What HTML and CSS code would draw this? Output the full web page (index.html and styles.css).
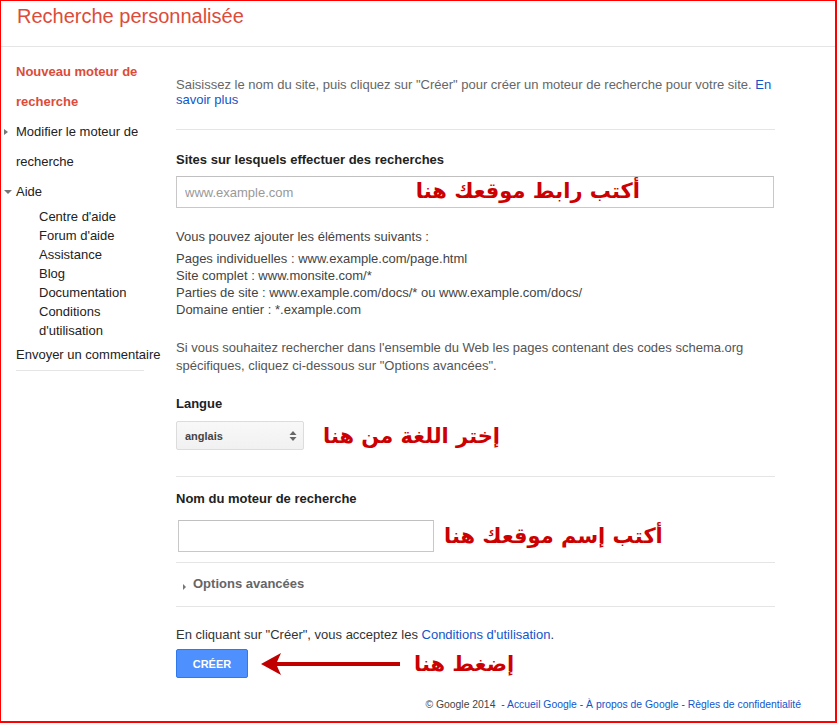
FILE: index.html
```html
<!DOCTYPE html>
<html lang="fr">
<head>
<meta charset="utf-8">
<title>Recherche personnalisée</title>
<link rel="stylesheet" href="styles.css">
</head>
<body>
<div class="frame">
  <header class="header">
    <h1 class="title">Recherche personnalisée</h1>
  </header>
  <div class="layout">
    <nav class="sidebar">
      <div class="nav-item nav-active">Nouveau moteur de recherche</div>
      <div class="nav-item nav-toggle"><span class="tri tri-right"></span>Modifier le moteur de recherche</div>
      <div class="nav-item nav-toggle"><span class="tri tri-down"></span>Aide</div>
      <ul class="subnav">
        <li>Centre d'aide</li>
        <li>Forum d'aide</li>
        <li>Assistance</li>
        <li>Blog</li>
        <li>Documentation</li>
        <li>Conditions d'utilisation</li>
      </ul>
      <div class="nav-feedback">Envoyer un commentaire</div>
    </nav>
    <main class="main">
      <p class="intro">Saisissez le nom du site, puis cliquez sur "Créer" pour créer un moteur de recherche pour votre site. <a class="link">En</a><br><a class="link">savoir plus</a></p>
      <hr class="rule rule-1">
      <h2 class="label label-sites">Sites sur lesquels effectuer des recherches</h2>
      <div class="site-field">
        <input class="text-input wide" type="text" placeholder="www.example.com">
        <span class="note note-over" dir="rtl">أكتب رابط موقعك هنا</span>
      </div>
      <p class="can-add">Vous pouvez ajouter les éléments suivants :</p>
      <p class="examples">Pages individuelles : www.example.com/page.html<br>Site complet : www.monsite.com/*<br>Parties de site : www.example.com/docs/* ou www.example.com/docs/<br>Domaine entier : *.example.com</p>
      <p class="schema">Si vous souhaitez rechercher dans l'ensemble du Web les pages contenant des codes schema.org spécifiques, cliquez ci-dessous sur "Options avancées".</p>
      <h2 class="label label-lang">Langue</h2>
      <div class="row row-lang">
        <div class="select">
          <span>anglais</span>
          <svg class="select-arrows" width="8" height="12" viewBox="0 0 8 12"><path d="M4 1 L7.5 5 H0.5 Z M4 11 L7.5 7 H0.5 Z" fill="#666"/></svg>
        </div>
        <span class="note" dir="rtl">إختر اللغة من هنا</span>
      </div>
      <hr class="rule rule-2">
      <h2 class="label label-name">Nom du moteur de recherche</h2>
      <div class="row row-name">
        <input class="text-input short" type="text">
        <span class="note" dir="rtl">أكتب إسم موقعك هنا</span>
      </div>
      <hr class="rule rule-3">
      <div class="advanced"><span class="tri tri-small"></span>Options avancées</div>
      <hr class="rule rule-4">
      <p class="terms">En cliquant sur "Créer", vous acceptez les <a class="link">Conditions d'utilisation</a>.</p>
      <div class="row row-btn">
        <button class="btn" type="button">CRÉER</button>
        <svg class="arrow" width="140" height="24" viewBox="0 0 140 24"><path d="M139 10 H16 L20 1 L0 12 L20 23 L16 14 H139 Z" fill="#c00000"/></svg>
        <span class="note" dir="rtl">إضغط هنا</span>
      </div>
    </main>
  </div>
  <footer class="footer">© Google 2014 &nbsp;- <a class="link">Accueil Google</a> - <a class="link">À propos de Google</a> - <a class="link">Règles de confidentialité</a></footer>
</div>
</body>
</html>
```

FILE: styles.css
```css
* { box-sizing: border-box; }
html, body { margin: 0; padding: 0; background: #fff; }
body { font-family: "Liberation Sans", Arial, sans-serif; font-size: 13px; color: #222; }

.frame {
  width: 837px;
  height: 723px;
  border-left: 1px solid #ff0000;
  border-top: 1px solid #ff0000;
  border-right: 2px solid #ff0000;
  border-bottom: 2px solid #ff0000;
  position: relative;
  overflow: hidden;
}

.header {
  height: 46px;
  border-bottom: 1px solid #e5e5e5;
  padding: 3px 0 0 16px;
}
.title {
  margin: 0;
  font-weight: normal;
  font-size: 20px;
  line-height: 24px;
  color: #dd4b39;
}

.layout { display: flex; }

.sidebar {
  width: 175px;
  flex: none;
  padding: 10px 0 0 15px;
}
.nav-item {
  width: 148px;
  line-height: 30px;
  font-size: 13px;
  color: #222;
  position: relative;
}
.nav-active { color: #dd4b39; font-weight: bold; }
.tri { display: inline-block; width: 0; height: 0; position: absolute; }
.tri-right {
  left: -12px; top: 12px;
  border-top: 3px solid transparent;
  border-bottom: 3px solid transparent;
  border-left: 4px solid #777;
}
.tri-down {
  left: -12px; top: 13px;
  border-left: 4px solid transparent;
  border-right: 4px solid transparent;
  border-top: 4px solid #777;
}
.subnav {
  list-style: none;
  margin: 0;
  padding: 0 0 0 23px;
  width: 148px;
  line-height: 19px;
}
.subnav li { width: 100px; }
.nav-feedback {
  margin-top: 5px;
  line-height: 19px;
  width: 128px;
  white-space: nowrap;
  padding-bottom: 6px;
  border-bottom: 1px solid #e5e5e5;
}

.main { width: 600px; padding-top: 30px; }
.main p { margin: 0; }
.link { color: #1155cc; text-decoration: none; }

.intro { color: #666; line-height: 15px; white-space: nowrap; }
.rule { border: 0; border-top: 1px solid #e5e5e5; margin: 0; width: 599px; }
.rule-1 { margin-top: 22px; }

.label { margin: 0; font-size: 13px; font-weight: bold; line-height: 16px; color: #222; }
.label-sites { margin-top: 22px; }

.site-field { position: relative; margin-top: 8px; width: 598px; }
.text-input {
  display: block;
  height: 32px;
  border: 1px solid #c8c8c8;
  border-top-color: #c0c0c0;
  font-family: "Liberation Sans", Arial, sans-serif;
  font-size: 13px;
  padding: 0 8px;
  color: #222;
  background: #fff;
  outline: none;
}
.text-input::placeholder { color: #999; }
.wide { width: 598px; }
.short { width: 256px; margin-left: 2px; }

.note {
  font-family: "DejaVu Sans", sans-serif;
  font-weight: bold;
  font-size: 21px;
  line-height: 26px;
  color: #cc0000;
  white-space: nowrap;
}
.note-over { position: absolute; right: 134px; top: 2px; }

.can-add { margin-top: 20px !important; line-height: 17px; color: #444; }
.examples { margin-top: 5px !important; line-height: 17px; color: #444; }
.schema { margin-top: 21px !important; line-height: 18px; color: #555; width: 599px; }

.label-lang { margin-top: 21px; }
.row { display: flex; align-items: center; }
.row-lang { margin-top: 9px; gap: 19px; }
.select {
  width: 128px;
  height: 29px;
  border: 1px solid #dcdcdc;
  border-radius: 2px;
  background: linear-gradient(#f8f8f8, #f1f1f1);
  display: flex;
  align-items: center;
  justify-content: space-between;
  padding: 0 6px 0 8px;
  font-size: 11px;
  font-weight: bold;
  color: #444;
}
.select-arrows { display: block; }

.rule-2 { margin-top: 26px; }
.label-name { margin-top: 14px; }
.row-name { margin-top: 13px; gap: 10px; }
.rule-3 { margin-top: 10px; }

.advanced {
  margin-top: 13px;
  line-height: 16px;
  font-weight: bold;
  color: #666;
  padding-left: 17px;
  position: relative;
}
.tri-small {
  left: 7px; top: 8px;
  border-top: 3px solid transparent;
  border-bottom: 3px solid transparent;
  border-left: 3px solid #777;
}
.rule-4 { margin-top: 14px; }

.terms { margin-top: 20px !important; line-height: 16px; color: #333; }
.row-btn { margin-top: 6px; }
.btn {
  width: 72px;
  height: 29px;
  background: #4d90fe;
  border: 1px solid #3079ed;
  border-radius: 2px;
  color: #fff;
  font-family: "Liberation Sans", Arial, sans-serif;
  font-size: 11px;
  font-weight: bold;
  padding: 0;
}
.arrow { display: block; margin-left: 13px; }
.row-btn .note { margin-left: 13px; }

.footer {
  position: absolute;
  right: 34px;
  bottom: 9px;
  font-size: 10.4px;
  line-height: 14px;
  color: #444;
  white-space: nowrap;
}
```
